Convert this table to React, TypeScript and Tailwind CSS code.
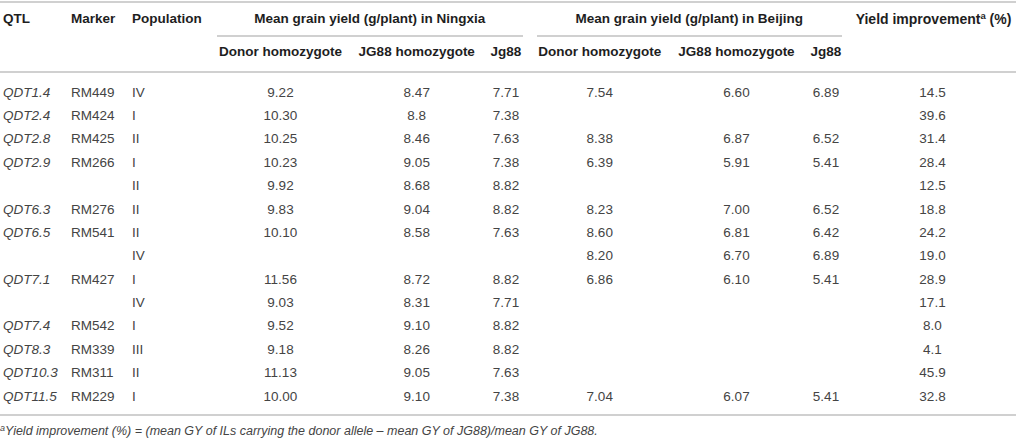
const rows: string[][] = [
  ['QDT1.4', 'RM449', 'IV', '9.22', '8.47', '7.71', '7.54', '6.60', '6.89', '14.5'],
  ['QDT2.4', 'RM424', 'I', '10.30', '8.8', '7.38', '', '', '', '39.6'],
  ['QDT2.8', 'RM425', 'II', '10.25', '8.46', '7.63', '8.38', '6.87', '6.52', '31.4'],
  ['QDT2.9', 'RM266', 'I', '10.23', '9.05', '7.38', '6.39', '5.91', '5.41', '28.4'],
  ['', '', 'II', '9.92', '8.68', '8.82', '', '', '', '12.5'],
  ['QDT6.3', 'RM276', 'II', '9.83', '9.04', '8.82', '8.23', '7.00', '6.52', '18.8'],
  ['QDT6.5', 'RM541', 'II', '10.10', '8.58', '7.63', '8.60', '6.81', '6.42', '24.2'],
  ['', '', 'IV', '', '', '', '8.20', '6.70', '6.89', '19.0'],
  ['QDT7.1', 'RM427', 'I', '11.56', '8.72', '8.82', '6.86', '6.10', '5.41', '28.9'],
  ['', '', 'IV', '9.03', '8.31', '7.71', '', '', '', '17.1'],
  ['QDT7.4', 'RM542', 'I', '9.52', '9.10', '8.82', '', '', '', '8.0'],
  ['QDT8.3', 'RM339', 'III', '9.18', '8.26', '8.82', '', '', '', '4.1'],
  ['QDT10.3', 'RM311', 'II', '11.13', '9.05', '7.63', '', '', '', '45.9'],
  ['QDT11.5', 'RM229', 'I', '10.00', '9.10', '7.38', '7.04', '6.07', '5.41', '32.8'],
]

// column widths measured from the reference
const cols = 'grid grid-cols-[64px_60px_86px_141px_131.5px_47px_140.5px_133px_46px_167px]'

export default function App() {
  return (
    <div
      className="w-[1016px] h-[440px] bg-white pt-px text-[13.5px] overflow-hidden"
      style={{ fontFamily: '"Liberation Sans", Arial, Helvetica, sans-serif' }}
    >
      <div className="border-t-2 border-[#d0d0d0]">
        {/* header row 1 */}
        <div className={`${cols} h-[34px] font-bold text-[#1e1e1e]`}>
          <div className="flex items-center pl-[3px] pb-[2px]">QTL</div>
          <div className="flex items-center pl-[7px] pb-[2px]">Marker</div>
          <div className="flex items-center pl-[8px] pb-[2px]">Population</div>
          <div className="col-span-3 px-[7px]">
            <div className="h-full flex items-center justify-center border-b-2 border-[#d0d0d0]">
              Mean grain yield (g/plant) in Ningxia
            </div>
          </div>
          <div className="col-span-3 px-[7px]">
            <div className="h-full flex items-center justify-center border-b-2 border-[#d0d0d0]">
              Mean grain yield (g/plant) in Beijing
            </div>
          </div>
          <div className="flex items-center justify-center pb-[2px] pl-[2px]">
            <span className="text-[14px]">
              Yield improvement<sup className="text-[9.5px] font-bold">a</sup> (%)
            </span>
          </div>
        </div>

        {/* header row 2 */}
        <div className={`${cols} h-[36px] font-bold text-[#1e1e1e] border-b-2 border-[#d0d0d0]`}>
          <div />
          <div />
          <div />
          <div className="flex items-center justify-center pb-[3px]">Donor homozygote</div>
          <div className="flex items-center justify-center pb-[3px]">JG88 homozygote</div>
          <div className="flex items-center justify-center pb-[3px]">Jg88</div>
          <div className="flex items-center justify-center pb-[3px]">Donor homozygote</div>
          <div className="flex items-center justify-center pb-[3px]">JG88 homozygote</div>
          <div className="flex items-center justify-center pb-[3px]">Jg88</div>
          <div />
        </div>

        {/* body */}
        <div className="pt-[8px] pb-[6px] border-b-2 border-[#d0d0d0] text-[#444]">
          {rows.map((r, i) => (
            <div key={i} className={`${cols} h-[23.4px] items-center`}>
              <div className="pl-[3px] italic">{r[0]}</div>
              <div className="pl-[7px]">{r[1]}</div>
              <div className="pl-[8px]">{r[2]}</div>
              {r.slice(3).map((v, j) => (
                <div key={j} className="text-center">
                  {v}
                </div>
              ))}
            </div>
          ))}
        </div>

        {/* footnote */}
        <div className="h-[30px] flex items-center italic text-[12.5px] text-[#444]">
          <span>
            <sup className="text-[9px]">a</sup>Yield improvement (%) = (mean GY of ILs carrying the donor allele – mean GY of
            JG88)/mean GY of JG88.
          </span>
        </div>
      </div>
    </div>
  )
}
